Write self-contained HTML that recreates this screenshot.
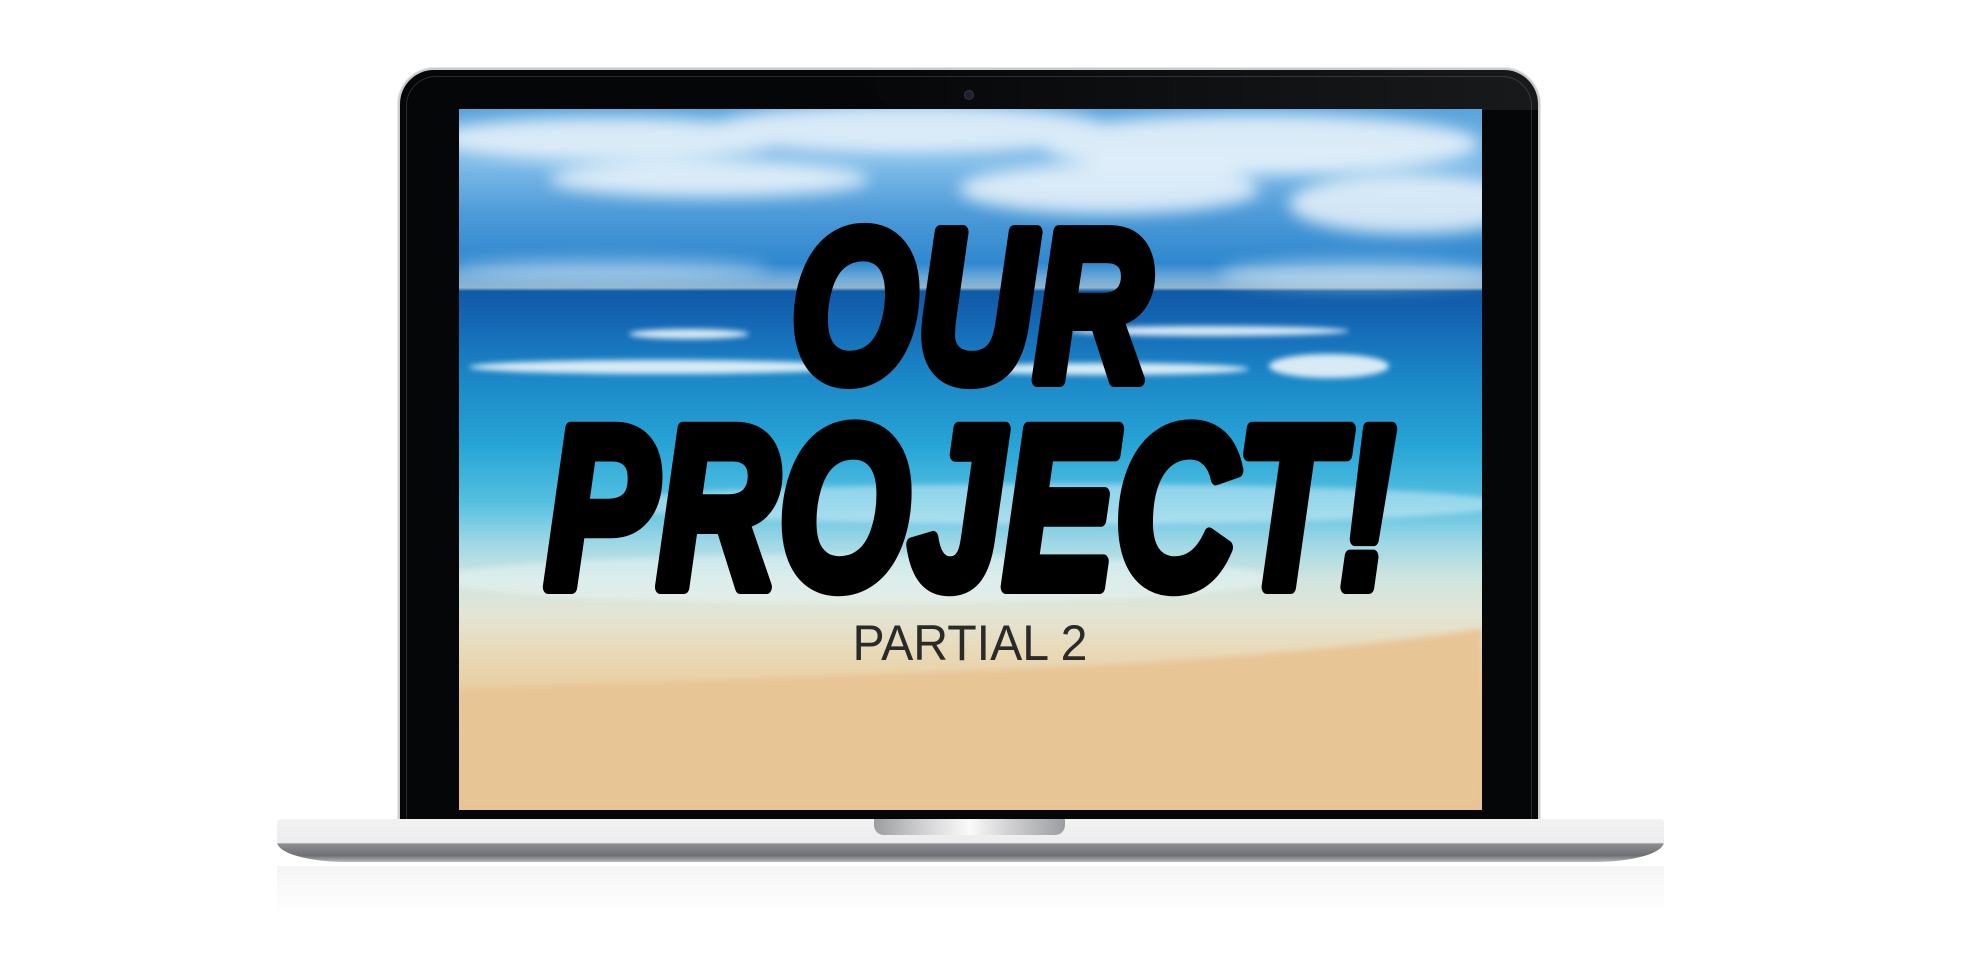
<!DOCTYPE html>
<html><head><meta charset="utf-8"><style>
html,body{margin:0;padding:0;width:1986px;height:978px;background:#fff;overflow:hidden;position:relative}
.abs{position:absolute}
#lid{left:400px;top:70px;width:1138px;height:752px;background:#050608;border-radius:34px 34px 0 0;box-shadow:0 0 0 2px #c9cbcd,0 0 0 3px #e6e6e6}
#lidin{left:406px;top:76px;width:1126px;height:746px;border-radius:30px 30px 0 0;border:1px solid #2a2b2e;box-sizing:border-box}
#gloss{left:820px;top:70px;width:718px;height:40px;background:linear-gradient(90deg,rgba(255,255,255,0),rgba(255,255,255,0.08));clip-path:polygon(4% 0,100% 0,100% 100%,10% 100%);border-radius:0 34px 0 0}
#screen{left:459px;top:109px;width:1023px;height:701px;overflow:hidden;
background:linear-gradient(180deg,#5aa3dc 0%,#7dbbe8 8%,#4d9ad8 15%,#2f88cf 22%,#6aa8d8 24%,#8eb5cf 25.5%,#0f5aa6 26%,#1466b4 30%,#1b86c6 38%,#27a4d6 48%,#54bfe0 56%,#9fd8e6 62%,#cfe5df 67%,#e3e5d6 72%,#e9d8b4 78%,#e8c797 86%,#e6c18e 100%)}
#base{left:277px;top:819px;width:1387px;height:43px;border-radius:4px 4px 70px 70px/4px 4px 20px 20px;background:linear-gradient(180deg,#f2f2f3 0%,#ececee 55%,#8d8e92 58%,#6e6f74 85%,#b9b9bc 100%)}
#hinge{left:874px;top:819px;width:191px;height:16px;border-radius:0 0 10px 10px;background:linear-gradient(90deg,#9c9da0,#d9d9db 30%,#fafafa 50%,#d2d2d4 70%,#9c9da0)}
#refl{left:277px;top:866px;width:1387px;height:50px;background:linear-gradient(180deg,rgba(235,235,237,0.5),rgba(255,255,255,0))}
</style></head><body>
<div id="lid" class="abs"></div>
<div id="lidin" class="abs"></div>
<div id="gloss" class="abs"></div>
<div class="abs" style="left:965px;top:91px;width:8px;height:8px;border-radius:50%;background:#1d2230;box-shadow:0 0 0 1px #33363e"></div>
<div id="screen" class="abs">
<svg width="1023" height="701" style="position:absolute;left:0;top:0">
<defs><filter id="b"><feGaussianBlur stdDeviation="8"/></filter><filter id="b2"><feGaussianBlur stdDeviation="3"/></filter></defs>
<g filter="url(#b)" fill="#fff" opacity="0.75">
<ellipse cx="150" cy="30" rx="180" ry="22"/><ellipse cx="450" cy="20" rx="200" ry="25"/><ellipse cx="800" cy="35" rx="220" ry="30"/>
<ellipse cx="250" cy="70" rx="160" ry="18"/><ellipse cx="650" cy="80" rx="150" ry="25"/><ellipse cx="950" cy="95" rx="120" ry="30"/>
<ellipse cx="150" cy="160" rx="160" ry="10" opacity=".6"/><ellipse cx="900" cy="165" rx="140" ry="15" opacity=".6"/>
</g>
<g filter="url(#b2)" fill="#eef7fb" opacity="0.9">
<ellipse cx="230" cy="225" rx="60" ry="5"/><ellipse cx="750" cy="222" rx="140" ry="5"/><ellipse cx="200" cy="258" rx="190" ry="7"/>
<ellipse cx="650" cy="260" rx="140" ry="6"/><ellipse cx="870" cy="257" rx="60" ry="12"/>
<ellipse cx="600" cy="395" rx="450" ry="20" opacity=".5"/><ellipse cx="400" cy="470" rx="420" ry="25" opacity=".5"/>
</g>
<path d="M0 580 Q300 570 560 560 T1023 520 L1023 701 L0 701Z" fill="#e8c595" filter="url(#b2)"/>
<text x="512" y="271" text-anchor="middle" font-family="Liberation Sans" font-weight="bold" font-style="italic" font-size="215" textLength="360" lengthAdjust="spacingAndGlyphs" fill="#000" stroke="#000" stroke-width="14" stroke-linejoin="round">OUR</text>
<text x="511" y="478" text-anchor="middle" font-family="Liberation Sans" font-weight="bold" font-style="italic" font-size="230" textLength="850" lengthAdjust="spacingAndGlyphs" fill="#000" stroke="#000" stroke-width="14" stroke-linejoin="round">PROJECT!</text>
<text x="511" y="551" text-anchor="middle" font-family="Liberation Sans" font-size="50" textLength="235" lengthAdjust="spacingAndGlyphs" fill="#2a2a2a">PARTIAL 2</text>
</svg>
</div>
<div id="refl" class="abs"></div>
<div id="base" class="abs"></div>
<div id="hinge" class="abs"></div>
</body></html>
